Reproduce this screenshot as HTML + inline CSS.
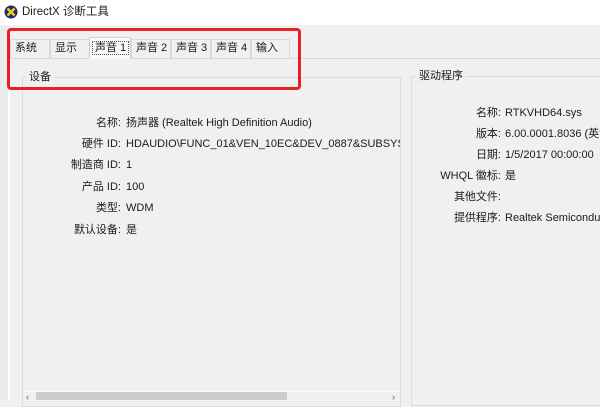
<!DOCTYPE html>
<html><head><meta charset="utf-8"><style>
*{margin:0;padding:0;box-sizing:border-box}
body{width:600px;height:400px;overflow:hidden;background:#f0f0f0;font-family:"Liberation Sans","Noto Sans CJK SC",sans-serif;font-size:11px;line-height:14px;color:#1a1a1a;position:relative}
.abs{position:absolute;white-space:nowrap}
.title{left:0;top:0;width:600px;height:25px;background:#fff}
.tab{top:39px;height:19px;border:1px solid #dadada;border-bottom:none;background:#f0f0f0;font-size:11px;line-height:17px;padding-left:4px}
.lbl{text-align:right;width:121px;left:0}
.val{left:126px}
.rl{text-align:right;width:101px;left:400px}
.rv{left:505px}
</style></head><body>
<div class="abs title"></div>
<svg class="abs" style="left:4px;top:5px" width="14" height="14" viewBox="0 0 14 14"><circle cx="7" cy="7" r="6.5" fill="#1d2a6b"/><path d="M3.5 3.5L10.5 10.5M10.5 3.5L3.5 10.5" stroke="#e8d020" stroke-width="2.6"/></svg>
<div class="abs" style="left:22px;top:5px;font-size:11.5px">DirectX 诊断工具</div>
<div class="abs" style="left:0;top:25px;width:8px;height:375px;background:#ebebeb"></div>
<div class="abs" style="left:8px;top:58px;width:2px;height:342px;background:#fff"></div>
<div class="abs" style="left:10px;top:58px;width:590px;height:1px;background:#d9d9d9"></div>
<div class="abs tab" style="left:10px;width:40px">系统</div>
<div class="abs tab" style="left:50px;width:40px">显示</div>
<div class="abs tab" style="left:89px;top:37px;height:22px;width:42px;background:#fafafa;border-color:#d0d0d0;line-height:20px;padding-left:2px"><span style="border:1px dotted #555;padding:0 2px">声音 1</span></div>
<div class="abs tab" style="left:131px;width:40px">声音 2</div>
<div class="abs tab" style="left:171px;width:40px">声音 3</div>
<div class="abs tab" style="left:211px;width:40px">声音 4</div>
<div class="abs tab" style="left:251px;width:39px">输入</div>
<div class="abs" style="left:22px;top:77px;width:379px;height:330px;border:1px solid #dcdcdc"></div>
<div class="abs" style="left:26px;top:70px;background:#f0f0f0;padding:0 3px">设备</div>
<div class="abs" style="left:411px;top:76px;width:200px;height:330px;border:1px solid #dcdcdc"></div>
<div class="abs" style="left:416px;top:69px;background:#f0f0f0;padding:0 3px">驱动程序</div>
<div class="abs lbl" style="top:116px">名称:</div><div class="abs val" style="top:116px">扬声器 (Realtek High Definition Audio)</div>
<div class="abs lbl" style="top:137px">硬件 ID:</div><div class="abs val" style="top:137px;width:274px;overflow:hidden">HDAUDIO\FUNC_01&amp;VEN_10EC&amp;DEV_0887&amp;SUBSYS_104</div>
<div class="abs lbl" style="top:158px">制造商 ID:</div><div class="abs val" style="top:158px">1</div>
<div class="abs lbl" style="top:180px">产品 ID:</div><div class="abs val" style="top:180px">100</div>
<div class="abs lbl" style="top:201px">类型:</div><div class="abs val" style="top:201px">WDM</div>
<div class="abs lbl" style="top:223px">默认设备:</div><div class="abs val" style="top:223px">是</div>
<div class="abs rl" style="top:106px">名称:</div><div class="abs rv" style="top:106px">RTKVHD64.sys</div>
<div class="abs rl" style="top:127px">版本:</div><div class="abs rv" style="top:127px">6.00.0001.8036 (英语</div>
<div class="abs rl" style="top:148px">日期:</div><div class="abs rv" style="top:148px">1/5/2017 00:00:00</div>
<div class="abs rl" style="top:169px">WHQL 徽标:</div><div class="abs rv" style="top:169px">是</div>
<div class="abs rl" style="top:190px">其他文件:</div>
<div class="abs rl" style="top:211px">提供程序:</div><div class="abs rv" style="top:211px">Realtek Semiconduc</div>
<div class="abs" style="left:23px;top:391px;width:377px;height:1px;background:#fafafa"></div>
<div class="abs" style="left:23px;top:392px;width:377px;height:8px;background:#f0f0f0"></div>
<div class="abs" style="left:36px;top:392px;width:251px;height:8px;background:#cdcdcd"></div>
<div class="abs" style="left:26px;top:390px;font-size:9px;color:#555">‹</div>
<div class="abs" style="left:392px;top:390px;font-size:9px;color:#555">›</div>
<div class="abs" style="left:7px;top:28px;width:294px;height:62px;border:3px solid #e52222;border-radius:4px"></div>
</body></html>
